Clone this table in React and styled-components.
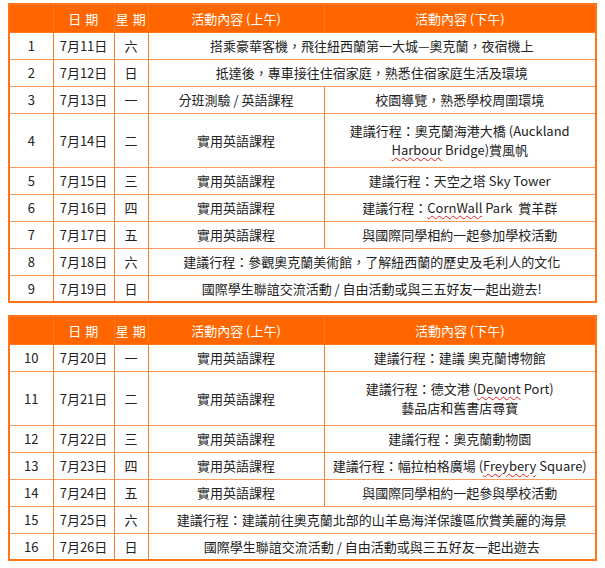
import React from 'react';
import styled, { createGlobalStyle } from 'styled-components';

const GlobalStyle = createGlobalStyle`
  body {
    margin: 0;
    background: #fff;
    font-family: "Noto Sans CJK TC", "Noto Sans", sans-serif;
  }
`;

const Page = styled.div`
  display: flex;
  flex-direction: column;
  gap: 12px;
  padding: 3px 0 0 8px;
  width: 589px;
`;

const Table = styled.table`
  width: 589px;
  border-collapse: collapse;
  table-layout: fixed;
  border: 2px solid #ff7419;
  font-size: 13px;
  color: #222;
`;

const HeadRow = styled.tr`
  height: 28px;
  background: #ff6600;
`;

const HeadCell = styled.th`
  border: 1px solid #ff7a24;
  color: #fff;
  font-weight: normal;
  text-align: center;
  padding: 0;
  letter-spacing: ${p => (p.$spaced ? '0.5px' : '0')};
`;

const Row = styled.tr`
  height: ${p => (p.$tall ? '54px' : '27px')};
`;

const Cell = styled.td`
  border-top: 1px solid #fb9a5a;
  border-bottom: 1px solid #fb9a5a;
  border-left: 1px solid #ff7a24;
  border-right: 1px solid #ff7a24;
  text-align: center;
  vertical-align: middle;
  padding: 0 2px;
  line-height: 19px;
  white-space: nowrap;
`;

const Typo = styled.span`
  text-decoration: underline wavy #e02020;
  text-decoration-thickness: 1px;
  text-underline-offset: 2px;
`;

const widths = [44, 61, 34, 176, 272];

function Schedule({ rows }) {
  return (
    <Table>
      <colgroup>
        {widths.map((w, i) => (
          <col key={i} style={{ width: w }} />
        ))}
      </colgroup>
      <thead>
        <HeadRow>
          <HeadCell />
          <HeadCell $spaced>日 期</HeadCell>
          <HeadCell $spaced>星 期</HeadCell>
          <HeadCell>活動內容 (上午)</HeadCell>
          <HeadCell>活動內容 (下午)</HeadCell>
        </HeadRow>
      </thead>
      <tbody>
        {rows.map(r => (
          <Row key={r.n} $tall={r.tall}>
            <Cell>{r.n}</Cell>
            <Cell>{r.date}</Cell>
            <Cell>{r.day}</Cell>
            {r.all ? (
              <Cell colSpan={2}>{r.all}</Cell>
            ) : (
              <>
                <Cell>{r.am}</Cell>
                <Cell>{r.pm}</Cell>
              </>
            )}
          </Row>
        ))}
      </tbody>
    </Table>
  );
}

const course = '實用英語課程';

const first = [
  { n: 1, date: '7月11日', day: '六', all: '搭乘豪華客機，飛往紐西蘭第一大城—奧克蘭，夜宿機上' },
  { n: 2, date: '7月12日', day: '日', all: '抵達後，專車接往住宿家庭，熟悉住宿家庭生活及環境' },
  { n: 3, date: '7月13日', day: '一', am: '分班測驗 / 英語課程', pm: '校園導覽，熟悉學校周圍環境' },
  {
    n: 4,
    date: '7月14日',
    day: '二',
    tall: true,
    am: course,
    pm: (
      <>
        建議行程：奧克蘭海港大橋 (Auckland
        <br />
        <Typo>Harbour</Typo> Bridge)賞風帆
      </>
    )
  },
  { n: 5, date: '7月15日', day: '三', am: course, pm: '建議行程：天空之塔 Sky Tower' },
  {
    n: 6,
    date: '7月16日',
    day: '四',
    am: course,
    pm: (
      <>
        建議行程：<Typo>CornWall</Typo> Park&nbsp; 賞羊群
      </>
    )
  },
  { n: 7, date: '7月17日', day: '五', am: course, pm: '與國際同學相約一起參加學校活動' },
  { n: 8, date: '7月18日', day: '六', all: '建議行程：參觀奧克蘭美術館，了解紐西蘭的歷史及毛利人的文化' },
  { n: 9, date: '7月19日', day: '日', all: '國際學生聯誼交流活動 / 自由活動或與三五好友一起出遊去!' }
];

const second = [
  { n: 10, date: '7月20日', day: '一', am: course, pm: '建議行程：建議 奧克蘭博物館' },
  {
    n: 11,
    date: '7月21日',
    day: '二',
    tall: true,
    am: course,
    pm: (
      <>
        建議行程：德文港 (<Typo>Devont</Typo> Port)
        <br />
        藝品店和舊書店尋寶
      </>
    )
  },
  { n: 12, date: '7月22日', day: '三', am: course, pm: '建議行程：奧克蘭動物園' },
  {
    n: 13,
    date: '7月23日',
    day: '四',
    am: course,
    pm: (
      <>
        建議行程：幅拉柏格廣場 (<Typo>Freybery</Typo> Square)
      </>
    )
  },
  { n: 14, date: '7月24日', day: '五', am: course, pm: '與國際同學相約一起參與學校活動' },
  { n: 15, date: '7月25日', day: '六', all: '建議行程：建議前往奧克蘭北部的山羊島海洋保護區欣賞美麗的海景' },
  { n: 16, date: '7月26日', day: '日', all: '國際學生聯誼交流活動 / 自由活動或與三五好友一起出遊去' }
];

export default function App() {
  return (
    <>
      <GlobalStyle />
      <Page>
        <Schedule rows={first} />
        <Schedule rows={second} />
      </Page>
    </>
  );
}
